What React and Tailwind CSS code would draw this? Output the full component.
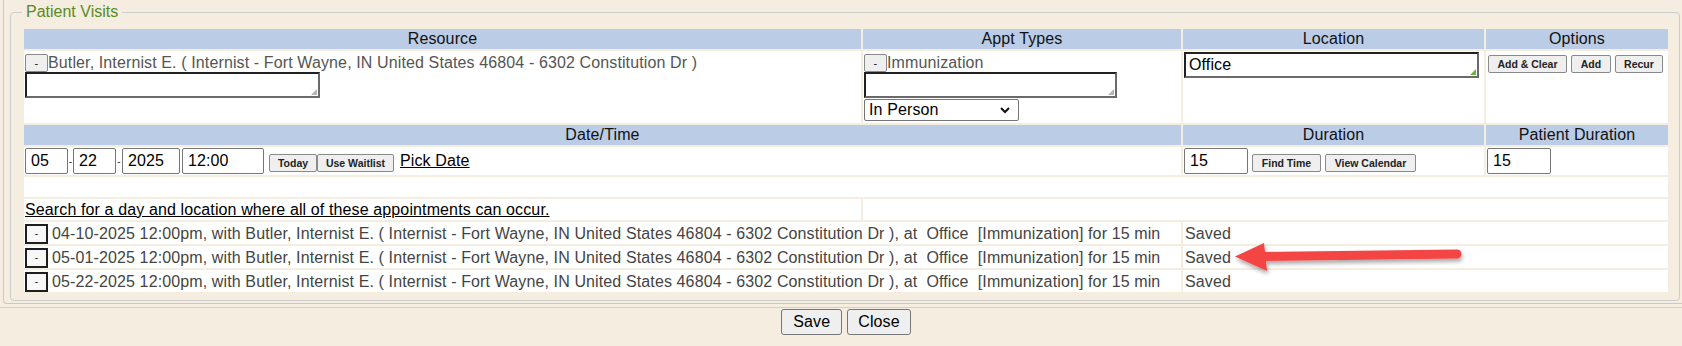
import React from 'react';

function MinusBtn() {
  return (
    <button className="w-[23px] h-[18px] bg-[#efefef] border border-[#8a8a8a] rounded-[2px] text-[11px] leading-none text-[#111] flex items-center justify-center shrink-0">
      -
    </button>
  );
}

function RowMinusBtn() {
  return (
    <button className="w-[23px] h-[20px] bg-[#f7f7f7] border-2 border-[#1e1e1e] text-[10px] leading-none text-[#111] flex items-end justify-center pb-[3px] shrink-0">
      -
    </button>
  );
}

function Area({ w, value = '', green = false }) {
  return (
    <div className={`relative ${w} h-[26px] border-2 border-t-[#202020] border-l-[#202020] border-b-[#6a6a6a] border-r-[#6a6a6a] bg-white`}>
      <div className="pl-[3px] pt-[1px] text-[16px] leading-[20px] text-black">{value}</div>
      <div
        className={`absolute right-[1px] bottom-[1px] w-0 h-0 border-l-[6px] border-l-transparent border-b-[6px] ${green ? 'border-b-[#6cb33e]' : 'border-b-[#b5b5b5]'}`}
      />
    </div>
  );
}

function SmallBtn({ w, children }) {
  return (
    <button className={`${w} h-[18px] bg-[#efefef] border border-[#8a8a8a] rounded-[2px] text-[10.5px] font-bold leading-none tracking-normal text-[#222] flex items-center justify-center shrink-0`}>
      {children}
    </button>
  );
}

function TextInput({ w, value }) {
  return (
    <div className={`${w} h-[26px] border border-[#767676] rounded-[2px] bg-white pl-[5px] text-[16px] leading-[24px] text-black shrink-0`}>
      {value}
    </div>
  );
}

const visits = ['04-10-2025', '05-01-2025', '05-22-2025'];

export default function App() {
  const th = 'bg-[#bbcce6] h-[20px] p-0 font-normal text-[#111] text-center leading-[20px] text-[16px]';
  const td = 'bg-white p-[1px] align-top';
  return (
    <div className="relative w-[1682px] h-[346px] bg-[#f4ede0] overflow-hidden font-['Liberation_Sans',Arial,sans-serif] text-[16px] tracking-[0.12px]">
      <div className="ml-[3px] border-l border-b border-[#cfc9bd] rounded-bl-[4px] pb-[2px] pt-[3px]">
        <fieldset className="ml-[6px] w-[1670px] border border-[#cdcdcd] rounded-[4px] pl-[11px] pr-[9px] pb-[6px]">
          <legend className="px-[4px] text-[16px] leading-[18px] text-[#5a8a1e] tracking-normal">Patient Visits</legend>
          <table className="mt-[6px] w-[1648px] table-fixed border-separate border-spacing-[2px]">
            <colgroup>
              <col className="w-[837px]" />
              <col className="w-[318px]" />
              <col className="w-[301px]" />
              <col className="w-[182px]" />
            </colgroup>
            <tbody>
              <tr>
                <th className={th}>Resource</th>
                <th className={th}>Appt Types</th>
                <th className={th}>Location</th>
                <th className={th}>Options</th>
              </tr>
              <tr>
                <td className={`${td} h-[72px]`}>
                  <div className="flex items-center h-[20px] pt-[2px]">
                    <MinusBtn />
                    <span className="text-[#555] leading-[18px] whitespace-nowrap">Butler, Internist E. ( Internist - Fort Wayne, IN United States 46804 - 6302 Constitution Dr )</span>
                  </div>
                  <Area w="w-[295px]" />
                </td>
                <td className={td}>
                  <div className="flex items-center h-[20px] pt-[2px]">
                    <MinusBtn />
                    <span className="text-[#555] leading-[18px]">Immunization</span>
                  </div>
                  <Area w="w-[253px]" />
                  <div className="relative mt-[1px] w-[155px] h-[22px] border border-[#767676] rounded-[2px] bg-white pl-[4px] text-[16px] leading-[20px] text-black">
                    In Person
                    <svg className="absolute right-[8px] top-[7px]" width="10" height="7" viewBox="0 0 10 7">
                      <path d="M1 1 L5 5 L9 1" fill="none" stroke="#111" strokeWidth="2" />
                    </svg>
                  </div>
                </td>
                <td className={td}>
                  <Area w="w-[295px]" value="Office" green />
                </td>
                <td className={td}>
                  <div className="flex gap-[4px] pt-[3px] pl-[1px]">
                    <SmallBtn w="w-[79px]">Add &amp; Clear</SmallBtn>
                    <SmallBtn w="w-[40px]">Add</SmallBtn>
                    <SmallBtn w="w-[48px]">Recur</SmallBtn>
                  </div>
                </td>
              </tr>
              <tr>
                <th className={th} colSpan={2}>Date/Time</th>
                <th className={th}>Duration</th>
                <th className={th}>Patient Duration</th>
              </tr>
              <tr>
                <td className={td} colSpan={2}>
                  <div className="flex items-center h-[26px]">
                    <TextInput w="w-[43px]" value="05" />
                    <span className="w-[5px] text-[10px] text-[#333] text-center">-</span>
                    <TextInput w="w-[43px]" value="22" />
                    <span className="w-[6px] text-[10px] text-[#333] text-center">-</span>
                    <TextInput w="w-[58px]" value="2025" />
                    <span className="w-[2px]" />
                    <TextInput w="w-[82px]" value="12:00" />
                    <span className="w-[5px]" />
                    <div className="flex mt-[4px]">
                      <SmallBtn w="w-[48px]">Today</SmallBtn>
                      <SmallBtn w="w-[77px]">Use Waitlist</SmallBtn>
                    </div>
                    <a className="ml-[6px] text-black underline">Pick Date</a>
                  </div>
                </td>
                <td className={td}>
                  <div className="flex items-center h-[26px]">
                    <TextInput w="w-[64px]" value="15" />
                    <div className="flex gap-[4px] ml-[4px] mt-[4px]">
                      <SmallBtn w="w-[69px]">Find Time</SmallBtn>
                      <SmallBtn w="w-[91px]">View Calendar</SmallBtn>
                    </div>
                  </div>
                </td>
                <td className={td}>
                  <TextInput w="w-[64px]" value="15" />
                </td>
              </tr>
              <tr>
                <td className="bg-white h-[20px] p-0 leading-[20px]" colSpan={4} />
              </tr>
              <tr>
                <td className="bg-white h-[21px] px-[1px] py-0 align-middle leading-[20px]">
                  <a className="text-black underline leading-[20px] whitespace-nowrap">Search for a day and location where all of these appointments can occur.</a>
                </td>
                <td className="bg-white p-0 leading-[20px]" colSpan={3} />
              </tr>
              {visits.map((d) => (
                <tr key={d}>
                  <td className="bg-white h-[22px] px-[1px] pt-[1px] pb-0 align-middle leading-[20px]" colSpan={2}>
                    <div className="flex items-center">
                      <RowMinusBtn />
                      <span className="ml-[4px] text-[#444] leading-[20px] whitespace-nowrap">
                        {d} 12:00pm, with Butler, Internist E. ( Internist - Fort Wayne, IN United States 46804 - 6302 Constitution Dr ), at {'\u00a0'}Office {'\u00a0'}[Immunization] for 15 min
                      </span>
                    </div>
                  </td>
                  <td className="bg-white h-[22px] px-[2px] pt-[1px] pb-0 align-middle leading-[20px] text-[#444]" colSpan={2}>
                    Saved
                  </td>
                </tr>
              ))}
            </tbody>
          </table>
        </fieldset>
      </div>
      <div className="mt-[3px] border-t border-[#d6d0c3] pt-[1px] pl-[10px] flex justify-center gap-[5px]">
        <button className="h-[26px] px-[11px] bg-[#efefef] border border-[#767676] rounded-[3px] text-[16px] text-black">Save</button>
        <button className="h-[26px] px-[10px] bg-[#efefef] border border-[#767676] rounded-[3px] text-[16px] text-black">Close</button>
      </div>

      <svg className="absolute left-[1223px] top-[233px]" width="250" height="50" viewBox="0 0 250 50">
        <defs>
          <filter id="arrowShadow" x="-20%" y="-60%" width="140%" height="220%">
            <feDropShadow dx="1" dy="3" stdDeviation="2" floodColor="#000" floodOpacity="0.35" />
          </filter>
        </defs>
        <g filter="url(#arrowShadow)" fill="#f44444">
          <path d="M36 19 L234 16.5 A4.5 4.5 0 0 1 234 25.5 L36 28 Z" />
          <polygon points="12,23.5 41,10 44,38" />
        </g>
      </svg>
    </div>
  );
}
